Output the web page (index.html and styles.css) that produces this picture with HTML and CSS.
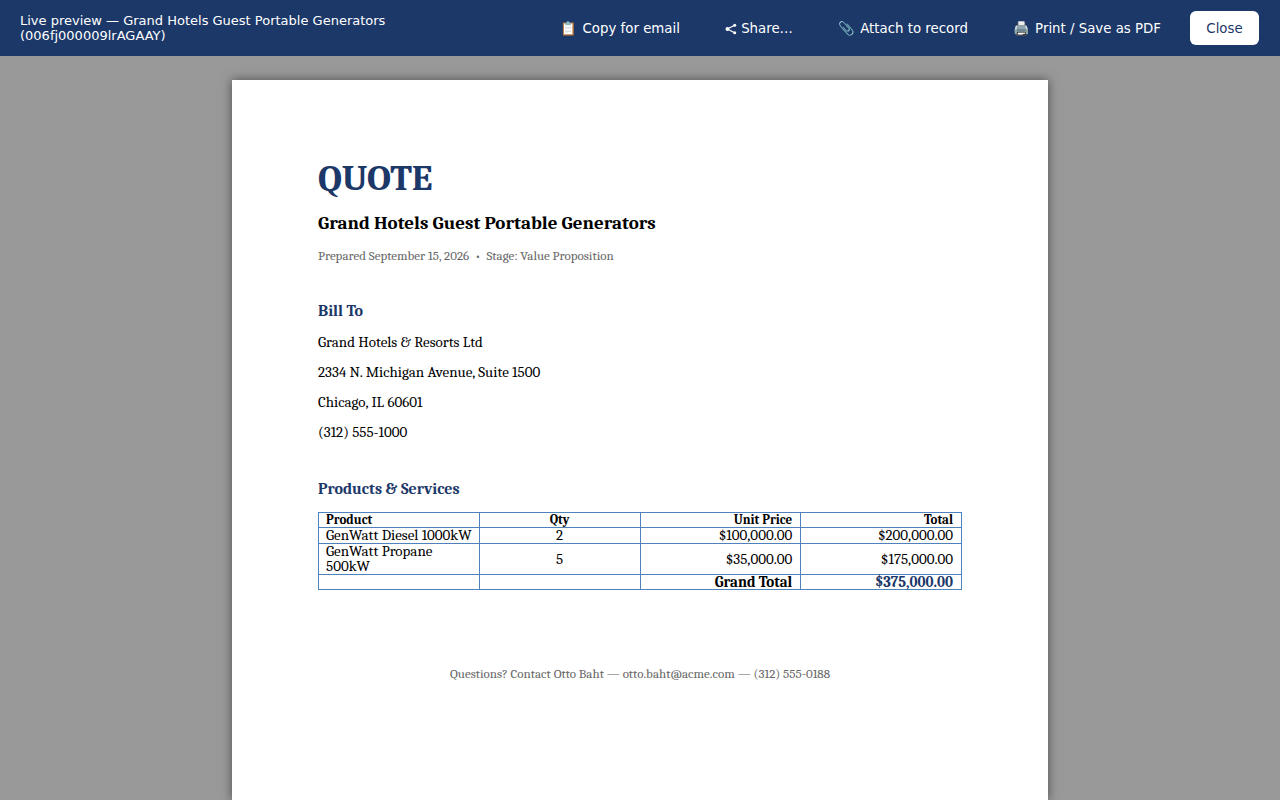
FILE: index.html
```html
<!DOCTYPE html>
<html lang="en">
<head>
<meta charset="utf-8">
<title>Live preview</title>
<link rel="stylesheet" href="styles.css">
</head>
<body>
<header class="toolbar">
  <div class="toolbar-title">Live preview — Grand Hotels Guest Portable Generators (006fj000009lrAGAAY)</div>
  <div class="toolbar-actions">
    <button class="action" type="button"><span class="icon">📋</span> Copy for email</button>
    <button class="action" type="button"><svg class="share-icon" viewBox="0 0 12 12" aria-hidden="true"><path d="M10 2 2.400 6 10 10" fill="none" stroke="currentColor" stroke-width="1.200"/><circle cx="2.400" cy="6" r="1.900" fill="currentColor"/><circle cx="9.700" cy="2.200" r="1.500" fill="currentColor"/><circle cx="9.700" cy="9.800" r="1.500" fill="currentColor"/></svg> Share…</button>
    <button class="action" type="button"><span class="icon">📎</span> Attach to record</button>
    <button class="action" type="button"><span class="icon">🖨️</span> Print / Save as PDF</button>
    <button class="action action-close" type="button">Close</button>
  </div>
</header>
<main class="stage">
  <article class="page">
    <h1 class="doc-title">QUOTE</h1>
    <h2 class="doc-name">Grand Hotels Guest Portable Generators</h2>
    <p class="doc-meta">Prepared September 15, 2026 &nbsp;•&nbsp; Stage: Value Proposition</p>
    <h3 class="section-title">Bill To</h3>
    <address class="bill-to">
      <p>Grand Hotels &amp; Resorts Ltd</p>
      <p>2334 N. Michigan Avenue, Suite 1500</p>
      <p>Chicago, IL 60601</p>
      <p>(312) 555-1000</p>
    </address>
    <h3 class="section-title">Products &amp; Services</h3>
    <table class="items">
      <thead>
        <tr><th class="start">Product</th><th>Qty</th><th class="end">Unit Price</th><th class="end">Total</th></tr>
      </thead>
      <tbody>
        <tr><td class="start">GenWatt Diesel 1000kW</td><td>2</td><td class="end">$100,000.00</td><td class="end">$200,000.00</td></tr>
        <tr><td class="start">GenWatt Propane 500kW</td><td>5</td><td class="end">$35,000.00</td><td class="end">$175,000.00</td></tr>
        <tr class="total-row"><td></td><td></td><td class="end">Grand Total</td><td class="end grand">$375,000.00</td></tr>
      </tbody>
    </table>
    <p class="contact">Questions? Contact Otto Baht — otto.baht@acme.com — (312) 555-0188</p>
  </article>
</main>
</body>
</html>
```
FILE: styles.css
```css
* { box-sizing: border-box; }
body {
  margin: 0;
  min-height: 100vh;
  display: flex;
  flex-direction: column;
  background: #999;
  overflow: hidden;
}
.toolbar {
  display: flex;
  align-items: center;
  justify-content: space-between;
  gap: 12px;
  padding: 11px 21px 11px 20px;
  background: #1c3869;
  color: #fff;
  font-family: "DejaVu Sans", sans-serif;
}
.toolbar-title { font-size: 13px; line-height: 15px; max-width: 400px; }
.toolbar-actions { display: flex; gap: 13px; flex-shrink: 0; }
.action {
  height: 34px;
  padding: 0 16px;
  border: 0;
  border-radius: 6px;
  background: transparent;
  color: #fff;
  font-family: inherit;
  white-space: nowrap;
}
.icon { margin-right: 1px; }
.action-close { min-width: 69px; background: #fff; color: #1c3869; }
.share-icon { width: 12px; height: 12px; vertical-align: -2px; }
.stage { flex: 1; display: flex; justify-content: center; padding: 24px 24px 0; }
.page {
  width: 100%;
  max-width: 816px;
  padding: 76px 86px 96px;
  background: #fff;
  color: #000;
  box-shadow: 0 0 10px rgba(0, 0, 0, 0.5);
  font-family: Cambria, "Noto Serif", serif;
  font-size: 15px;
}
.doc-title { margin: 0; color: #1c3869; font-size: 37px; line-height: 44px; }
.doc-name { margin: 10px 0 0; font-size: 19px; line-height: 26px; }
.doc-meta { margin: 12px 0 0; color: #666; font-size: 13px; line-height: 16px; }
.section-title { margin: 36px 0 0; color: #1c3869; font-size: 16px; line-height: 22px; }
.bill-to { margin-top: 10px; font-style: normal; line-height: 20px; display: grid; gap: 10px; }
.bill-to p { margin: 0; }
.items {
  width: 100%;
  margin-top: 12px;
  border-collapse: collapse;
  table-layout: fixed;
  line-height: 15px;
}
.items th, .items td { padding: 0 8px; height: 16px; border: 1px solid #4f81bd; text-align: center; }
.items th { height: 15px; font-size: 13px; line-height: 14px; }
.items .start { padding: 0 4px 0 7px; text-align: left; }
.items .end { text-align: right; }
.total-row { font-weight: bold; }
.items .total-row td { height: 15px; line-height: 14px; }
.items .grand { color: #1c3869; }
.contact { margin: 76px 0 0; color: #666; font-size: 13px; line-height: 16px; text-align: center; }
```
